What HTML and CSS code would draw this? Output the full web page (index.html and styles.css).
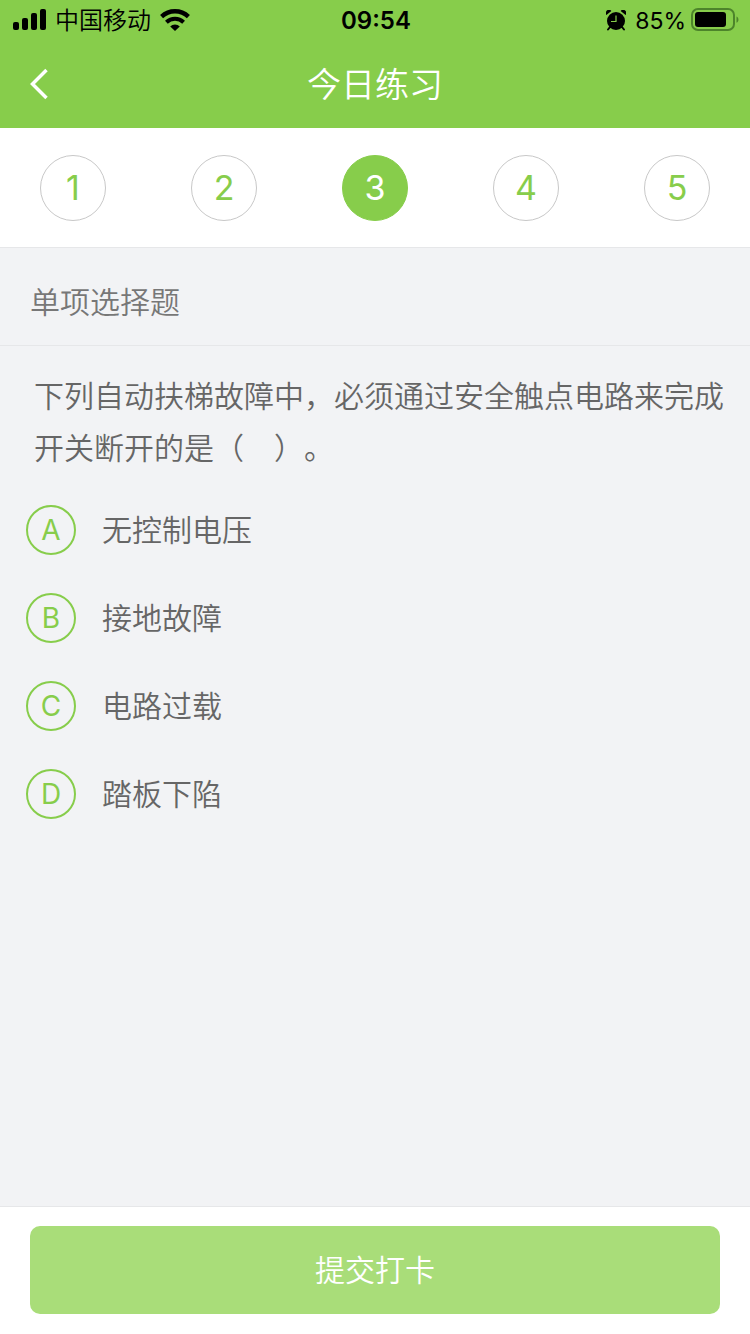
FILE: index.html
```html
<!DOCTYPE html>
<html lang="zh-CN">
<head>
    <meta charset="UTF-8">
    <meta name="viewport" content="width=device-width, initial-scale=1.0">
    <title>今日练习</title>
    <link rel="stylesheet" href="styles.css">
</head>
<body>
    <header class="header">
        <div class="status-bar">
            <div class="status-left">
                <svg class="icon-signal" width="33" height="22" viewBox="0 0 33 22" aria-hidden="true">
                    <rect x="0" y="13" width="6" height="8" rx="2"/>
                    <rect x="9" y="9" width="6" height="12" rx="2"/>
                    <rect x="18" y="4" width="6" height="17" rx="2"/>
                    <rect x="27" y="0" width="6" height="21" rx="2"/>
                </svg>
                <span class="carrier">中国移动</span>
                <svg class="icon-wifi" width="30" height="22" viewBox="0 0 30 22" aria-hidden="true">
                    <path d="M1.600 7.600a19.500 19.500 0 0 1 26.800 0" fill="none" stroke="#000" stroke-width="4.400"/>
                    <path d="M6.400 13.200a12.500 12.500 0 0 1 17.200 0" fill="none" stroke="#000" stroke-width="4"/>
                    <path d="M10.200 17.400a6.800 6.800 0 0 1 9.600 0L15 22z"/>
                </svg>
            </div>
            <span class="status-time">09:54</span>
            <div class="status-right">
                <svg class="icon-alarm" width="20" height="21" viewBox="0 0 20 21" aria-hidden="true">
                    <path d="M.4 5A3.200 3.200 0 0 1 5.400 1z"/>
                    <path d="M19.600 5A3.200 3.200 0 0 0 14.600 1z"/>
                    <path d="M4 17l-2 2.500M16 17l2 2.500" fill="none" stroke="#000" stroke-width="2" stroke-linecap="round"/>
                    <circle cx="10" cy="11" r="9"/>
                    <path d="M10 5.500V11.500H5" fill="none" stroke="#87cd4b" stroke-width="1.200"/>
                </svg>
                <span class="battery-level">85%</span>
                <svg class="icon-battery" width="48" height="24" viewBox="0 0 48 24" aria-hidden="true">
                    <rect x="1" y="1" width="42" height="21" rx="6" fill="none" stroke="#4d842b" stroke-width="2"/>
                    <rect x="4" y="4" width="31" height="15" rx="3"/>
                    <path d="M45.500 8.500c2.600 1.300 2.600 5 0 6.300z" fill="#4d842b"/>
                </svg>
            </div>
        </div>
        <nav class="nav-bar">
            <a href="#" class="back" aria-label="返回">
                <svg width="18" height="32" viewBox="0 0 18 32" aria-hidden="true">
                    <path d="M16.500 2L2.500 16l14 14" fill="none" stroke="#fff" stroke-width="3.500"/>
                </svg>
            </a>
            <h1 class="title">今日练习</h1>
        </nav>
    </header>

    <div class="steps">
        <button type="button" class="step">1</button>
        <button type="button" class="step">2</button>
        <button type="button" class="step active" aria-current="step">3</button>
        <button type="button" class="step">4</button>
        <button type="button" class="step">5</button>
    </div>

    <form class="quiz">
        <h2 class="quiz-type">单项选择题</h2>
        <fieldset class="question">
            <legend class="question-text">下列自动扶梯故障中，必须通过安全触点电路来完成开关断开的是（　）。</legend>
            <div class="options">
                <label class="option">
                    <input type="radio" name="answer" value="A">
                    <span class="option-letter">A</span>
                    <span>无控制电压</span>
                </label>
                <label class="option">
                    <input type="radio" name="answer" value="B">
                    <span class="option-letter">B</span>
                    <span>接地故障</span>
                </label>
                <label class="option">
                    <input type="radio" name="answer" value="C">
                    <span class="option-letter">C</span>
                    <span>电路过载</span>
                </label>
                <label class="option">
                    <input type="radio" name="answer" value="D">
                    <span class="option-letter">D</span>
                    <span>踏板下陷</span>
                </label>
            </div>
        </fieldset>
        <div class="footer">
            <button type="submit" class="submit-button">提交打卡</button>
        </div>
    </form>
</body>
</html>
```

FILE: styles.css
```css
:root {
    --primary-color: #87cd4b;
    --primary-light: #a9dd79;
    --background-color: #f2f3f5;
    --line-color: #e6e7e9;
    --text-color: #666666;
}

* {
    margin: 0;
    padding: 0;
    box-sizing: border-box;
}

body {
    font-family: Inter, "Noto Sans CJK SC", sans-serif;
    font-size: 30px;
    font-weight: 350;
    line-height: 50px;
    color: var(--text-color);
    background-color: var(--background-color);
    display: flex;
    flex-direction: column;
    min-height: 100vh;
}

button {
    font: inherit;
    cursor: pointer;
}

svg {
    display: block;
}

/* Header */
.header {
    background-color: var(--primary-color);
}

.status-bar {
    display: grid;
    grid-template-columns: 1fr auto 1fr;
    align-items: center;
    height: 40px;
    padding: 0 11px 0 13px;
    font-size: 24px;
    line-height: 42px;
    color: #000;
}

.status-bar svg {
    margin-bottom: 2px;
}

.status-left, .status-right {
    display: flex;
    align-items: center;
}

.status-left {
    gap: 9px;
}

.status-right {
    justify-content: flex-end;
    gap: 5px;
}

.status-time {
    font-weight: 600;
}

.battery-level {
    margin-left: 4px;
    font-size: 23px;
    font-weight: 400;
}

.nav-bar {
    display: grid;
    grid-template-columns: 1fr auto 1fr;
    align-items: center;
    height: 88px;
    padding: 0 30px;
}

.back {
    justify-self: start;
}

.title {
    padding-top: 2px;
    font-size: 34px;
    font-weight: 350;
    color: white;
}

/* Question numbers */
.steps {
    display: flex;
    justify-content: space-between;
    align-items: center;
    height: 120px;
    padding: 0 40px;
    background-color: white;
    border-bottom: 1px solid var(--line-color);
}

.step {
    width: 66px;
    height: 66px;
    border: 1px solid #c8c8c8;
    border-radius: 50%;
    background-color: white;
    color: var(--primary-color);
    font-size: 34px;
    font-weight: 400;
}

.step.active {
    background-color: var(--primary-color);
    border-color: var(--primary-color);
    color: white;
}

/* Question */
.quiz {
    flex: 1;
    display: flex;
    flex-direction: column;
}

.quiz-type {
    padding: 29px 30px 18px;
    border-bottom: 1px solid var(--line-color);
    font-size: 30px;
    font-weight: 350;
    color: #777777;
}

.question {
    flex: 1;
    border: none;
    padding: 24px 26px;
}

.question-text {
    padding: 24px 0 0 8px;
    line-height: 52px;
    text-spacing-trim: space-all;
}

.options {
    margin-top: -12px;
}

.option {
    display: flex;
    align-items: center;
    gap: 26px;
    height: 88px;
    cursor: pointer;
}

.option input {
    position: absolute;
    opacity: 0;
}

.option-letter {
    display: flex;
    justify-content: center;
    align-items: center;
    width: 50px;
    height: 50px;
    border: 2px solid var(--primary-color);
    border-radius: 50%;
    color: var(--primary-color);
    font-size: 28px;
    font-weight: 400;
}

.option input:checked + .option-letter {
    background-color: var(--primary-color);
    color: white;
}

/* Footer */
.footer {
    padding: 19px 30px 20px;
    background-color: white;
    border-top: 1px solid var(--line-color);
}

.submit-button {
    display: block;
    width: 100%;
    height: 88px;
    border: none;
    border-radius: 10px;
    background-color: var(--primary-light);
    color: white;
}
```
